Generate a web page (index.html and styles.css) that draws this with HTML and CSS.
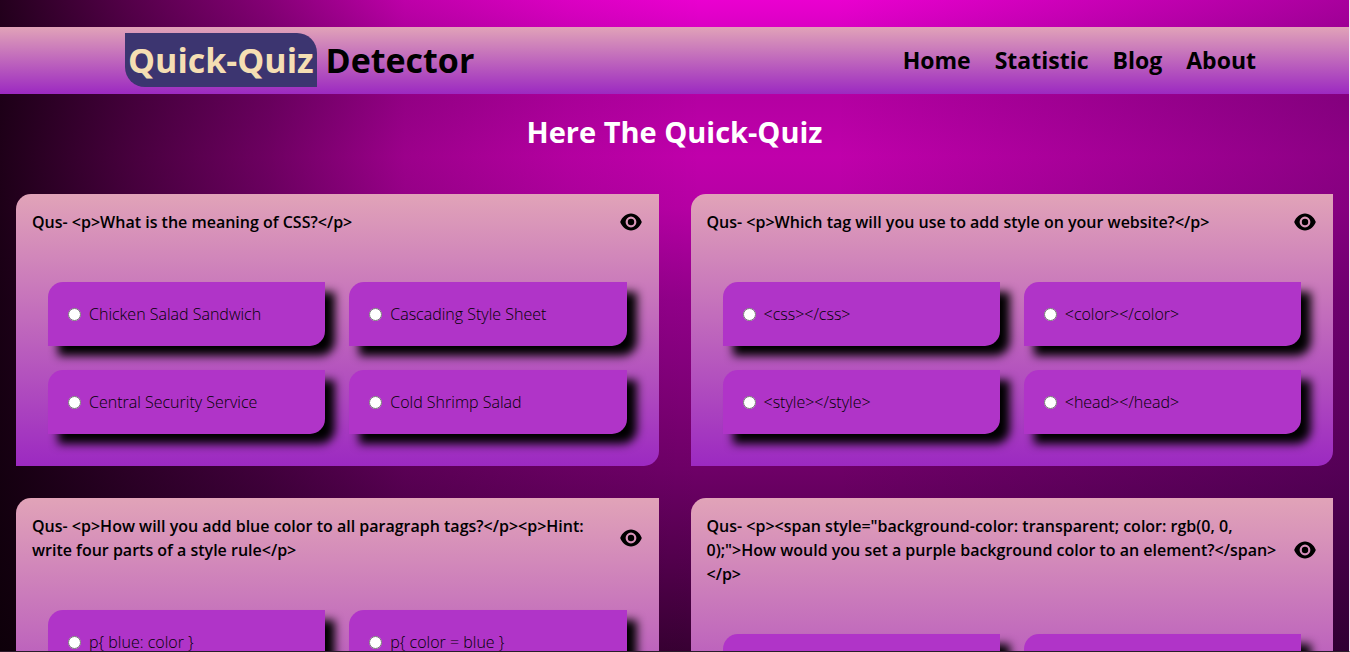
FILE: index.html
```html
<!DOCTYPE html>
<html lang="en">
<head>
<meta charset="utf-8">
<meta name="viewport" content="width=device-width, initial-scale=1">
<title>Quick-Quiz Detector</title>
<link rel="stylesheet" href="styles.css">
</head>
<body>
<svg class="sprite" aria-hidden="true">
  <symbol id="eye" viewBox="0 0 24 24">
    <path fill-rule="evenodd" d="M12 3.600C7 3.600 3 7.300 1.200 12C3 16.700 7 20.400 12 20.400S21 16.700 22.800 12C21 7.300 17 3.600 12 3.600ZM12 6.600A5.400 5.400 0 1 1 12 17.400A5.400 5.400 0 1 1 12 6.600Z"/>
    <circle cx="12" cy="12" r="3.200"/>
  </symbol>
</svg>
<div class="page">
  <header class="navbar">
    <h1 class="brand"><span class="brand-tag">Quick-Quiz</span> Detector</h1>
    <nav class="links">
      <a href="#home">Home</a>
      <a href="#statistic">Statistic</a>
      <a href="#blog">Blog</a>
      <a href="#about">About</a>
    </nav>
  </header>
  <main>
    <h2 class="title">Here The Quick-Quiz</h2>
    <div class="quiz-grid">
      <section class="card">
        <div class="question">
          <h3>Qus- &lt;p&gt;What is the meaning of CSS?&lt;/p&gt;</h3>
          <button class="reveal" type="button" aria-label="Show answer"><svg><use href="#eye"/></svg></button>
        </div>
        <div class="options">
          <label class="option"><input type="radio" name="q1"><span>Chicken Salad Sandwich</span></label>
          <label class="option"><input type="radio" name="q1"><span>Cascading Style Sheet</span></label>
          <label class="option"><input type="radio" name="q1"><span>Central Security Service</span></label>
          <label class="option"><input type="radio" name="q1"><span>Cold Shrimp Salad</span></label>
        </div>
      </section>
      <section class="card">
        <div class="question">
          <h3>Qus- &lt;p&gt;Which tag will you use to add style on your website?&lt;/p&gt;</h3>
          <button class="reveal" type="button" aria-label="Show answer"><svg><use href="#eye"/></svg></button>
        </div>
        <div class="options">
          <label class="option"><input type="radio" name="q2"><span>&lt;css&gt;&lt;/css&gt;</span></label>
          <label class="option"><input type="radio" name="q2"><span>&lt;color&gt;&lt;/color&gt;</span></label>
          <label class="option"><input type="radio" name="q2"><span>&lt;style&gt;&lt;/style&gt;</span></label>
          <label class="option"><input type="radio" name="q2"><span>&lt;head&gt;&lt;/head&gt;</span></label>
        </div>
      </section>
      <section class="card">
        <div class="question">
          <h3>Qus- &lt;p&gt;How will you add blue color to all paragraph tags?&lt;/p&gt;&lt;p&gt;Hint: write four parts of a style rule&lt;/p&gt;</h3>
          <button class="reveal" type="button" aria-label="Show answer"><svg><use href="#eye"/></svg></button>
        </div>
        <div class="options">
          <label class="option"><input type="radio" name="q3"><span>p{ blue: color }</span></label>
          <label class="option"><input type="radio" name="q3"><span>p{ color = blue }</span></label>
        </div>
      </section>
      <section class="card">
        <div class="question">
          <h3>Qus- &lt;p&gt;&lt;span style="background-color: transparent; color: rgb(0, 0, 0);"&gt;How would you set a purple background color to an element?&lt;/span&gt;&lt;/p&gt;</h3>
          <button class="reveal" type="button" aria-label="Show answer"><svg><use href="#eye"/></svg></button>
        </div>
        <div class="options">
          <label class="option"><input type="radio" name="q4"><span></span></label>
          <label class="option"><input type="radio" name="q4"><span></span></label>
        </div>
      </section>
    </div>
  </main>
</div>
</body>
</html>
```
FILE: styles.css
```css
* { box-sizing: border-box; }

html, body { height: 100%; }

body {
  margin: 0;
  overflow: hidden;
  font-family: "Open Sans", "Noto Sans", sans-serif;
  font-size: 16px;
  line-height: 24px;
  color: #000;
}

h1, h2, h3 { margin: 0; font-weight: 700; }

.sprite { display: none; }

.page {
  height: 100%;
  overflow: hidden;
  padding-top: 27px;
  border-right: 1px solid #f3e6f3;
  border-bottom: 1px solid #2b1c2b;
  background:
    linear-gradient(90deg, rgba(8, 0, 4, 0.88) 0%, rgba(10, 0, 6, 0.66) 10%, rgba(10, 0, 8, 0.45) 20%, rgba(10, 0, 10, 0.2) 30%, rgba(10, 0, 10, 0.07) 42%, rgba(0, 0, 0, 0) 52%, rgba(0, 0, 0, 0) 62%, rgba(30, 0, 50, 0.32) 100%),
    linear-gradient(180deg, #ea00d0 0%, #b400a2 15%, #c000ab 24%, #b600a4 32%, #92008a 46%, #6e0067 72%, #380033 100%);
}

.navbar {
  display: flex;
  justify-content: space-between;
  align-items: center;
  height: 67px;
  padding: 0 93px 1px 125px;
  background: linear-gradient(#e1a3b8, #9c29c1);
}

.brand {
  font-size: 34px;
  line-height: 54px;
}

.brand-tag {
  display: inline-block;
  padding: 0 3px;
  color: #f5deb3;
  background: #3c3570;
  border-radius: 0 20px 0 20px;
}

.links {
  display: flex;
  gap: 24px;
  font-size: 23px;
  font-weight: 700;
  line-height: 32px;
}

.links a {
  color: inherit;
  text-decoration: none;
}

.title {
  padding: 20px 0 44px;
  font-size: 29px;
  line-height: 36px;
  text-align: center;
  color: #fff;
}

.quiz-grid {
  display: grid;
  grid-template-columns: 1fr 1fr;
  gap: 32px;
  padding: 0 16px;
}

.card {
  padding: 16px;
  border-radius: 15px 0 15px 0;
  background: linear-gradient(#e1a3b8, #9c29c1);
}

.card:nth-child(n + 3) { min-height: 296px; }

.question {
  display: flex;
  justify-content: space-between;
  align-items: center;
  gap: 16px;
  padding-bottom: 48px;
}

.question h3 {
  font-size: 16px;
  font-weight: 600;
}

.reveal {
  flex: none;
  width: 24px;
  height: 24px;
  padding: 0;
  border: 0;
  background: none;
}

.reveal svg {
  display: block;
  width: 24px;
  height: 24px;
}

.options {
  display: grid;
  grid-template-columns: 1fr 1fr;
  gap: 24px;
  padding: 0 16px 16px;
}

.option {
  display: flex;
  align-items: center;
  gap: 8px;
  height: 64px;
  padding: 0 20px;
  font-weight: 300;
  border-radius: 15px 0 15px 0;
  background: #b034c8;
  box-shadow: 10px 10px 10px #000;
}

.option input {
  flex: none;
  width: 13px;
  height: 13px;
  margin: 0;
}
```
